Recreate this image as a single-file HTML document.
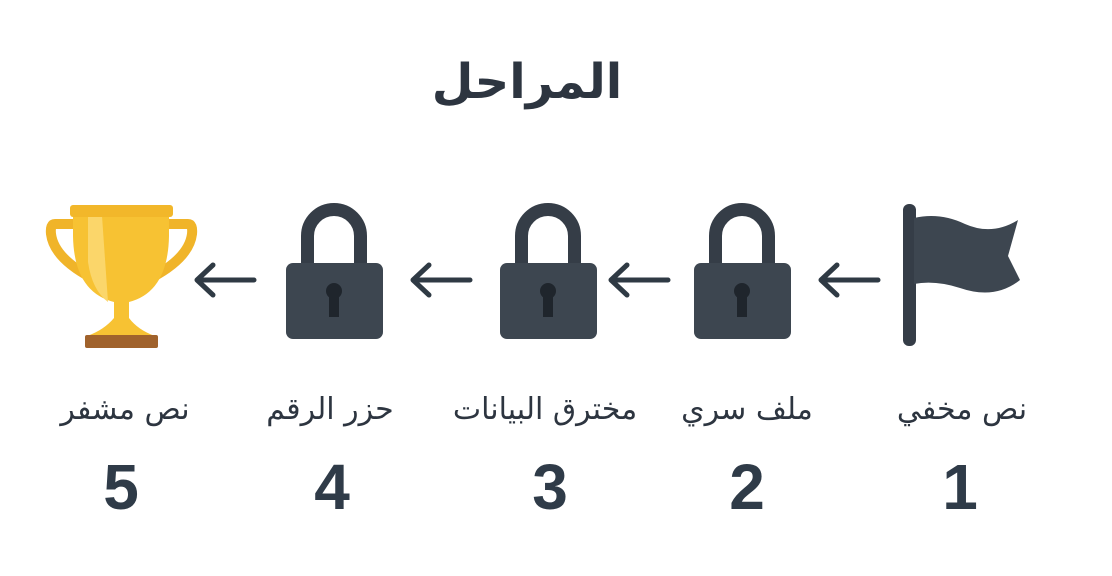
<!DOCTYPE html>
<html><head><meta charset="utf-8"><style>
html,body{margin:0;padding:0;background:#fff;width:1112px;height:576px;overflow:hidden}
svg{display:block}
.t{font-family:"DejaVu Sans",sans-serif;fill:#2d3540}
.n{font-family:"Liberation Sans",sans-serif;font-weight:bold;fill:#2f3b48;font-size:64px}
</style></head><body>
<svg width="1112" height="576" viewBox="0 0 1112 576">
<defs>
<g id="lock">
<path d="M-26.5 62 V33 A26.5 26.5 0 0 1 26.5 33 V62" fill="none" stroke="#353d47" stroke-width="13"/>
<rect x="-48" y="60" width="97" height="76" rx="7" fill="#3d4650"/>
<circle cx="0" cy="88" r="8" fill="#1f252c"/>
<path d="M-5 91 L-5 114 L5 114 L5 91 Z" fill="#1f252c"/>
</g>
<g id="arr" stroke="#2f3a44" stroke-width="5" stroke-linecap="round" stroke-linejoin="round" fill="none">
<path d="M0 0 H57 M16 -15 L0 0 L16 15"/>
</g>
</defs>
<text x="527" y="98" text-anchor="middle" class="t" style="font-size:48px;font-weight:bold;direction:rtl">المراحل</text>

<!-- trophy -->
<path d="M74 224 H55 Q50 224 51 234 Q54 258 92 278" fill="none" stroke="#f0b429" stroke-width="10"/>
<path d="M169 224 H188 Q193 224 192 234 Q189 258 151 278" fill="none" stroke="#f0b429" stroke-width="10"/>
<path d="M73 214 H169 V236 Q168 292 129 302 V318 Q138 330 155 336 H87 Q104 330 114 318 V302 Q74 292 73 236 Z" fill="#f7c233"/>
<path d="M88 216 H102 L108 302 Q92 290 88 262 Z" fill="#fbd66a"/>
<rect x="70" y="205" width="103" height="12" rx="3" fill="#f2b72a"/>
<rect x="85" y="335" width="73" height="13" rx="2" fill="#a0622c"/>

<use href="#arr" x="197" y="280"/>
<use href="#arr" x="413" y="280"/>
<use href="#arr" x="611" y="280"/>
<use href="#arr" x="821" y="280"/>

<use href="#lock" x="334" y="203"/>
<use href="#lock" x="548" y="203"/>
<use href="#lock" x="742" y="203"/>

<!-- flag -->
<rect x="903" y="204" width="13" height="142" rx="6" fill="#353d47"/>
<path d="M914 218 Q940 212 965 224 Q992 236 1018 220 L1008 256 L1020 280 Q995 300 960 288 Q935 280 914 284 Z" fill="#3d4650"/>

<g class="t" style="font-size:30px" text-anchor="middle">
<text x="125" y="419">نص مشفر</text>
<text x="330" y="419">حزر الرقم</text>
<text x="545" y="419">مخترق البيانات</text>
<text x="747" y="419">ملف سري</text>
<text x="962" y="419">نص مخفي</text>
</g>
<g class="n" text-anchor="middle">
<text x="121" y="509">5</text>
<text x="332" y="509">4</text>
<text x="550" y="509">3</text>
<text x="747" y="509">2</text>
<text x="960" y="509">1</text>
</g>
</svg>
</body></html>
